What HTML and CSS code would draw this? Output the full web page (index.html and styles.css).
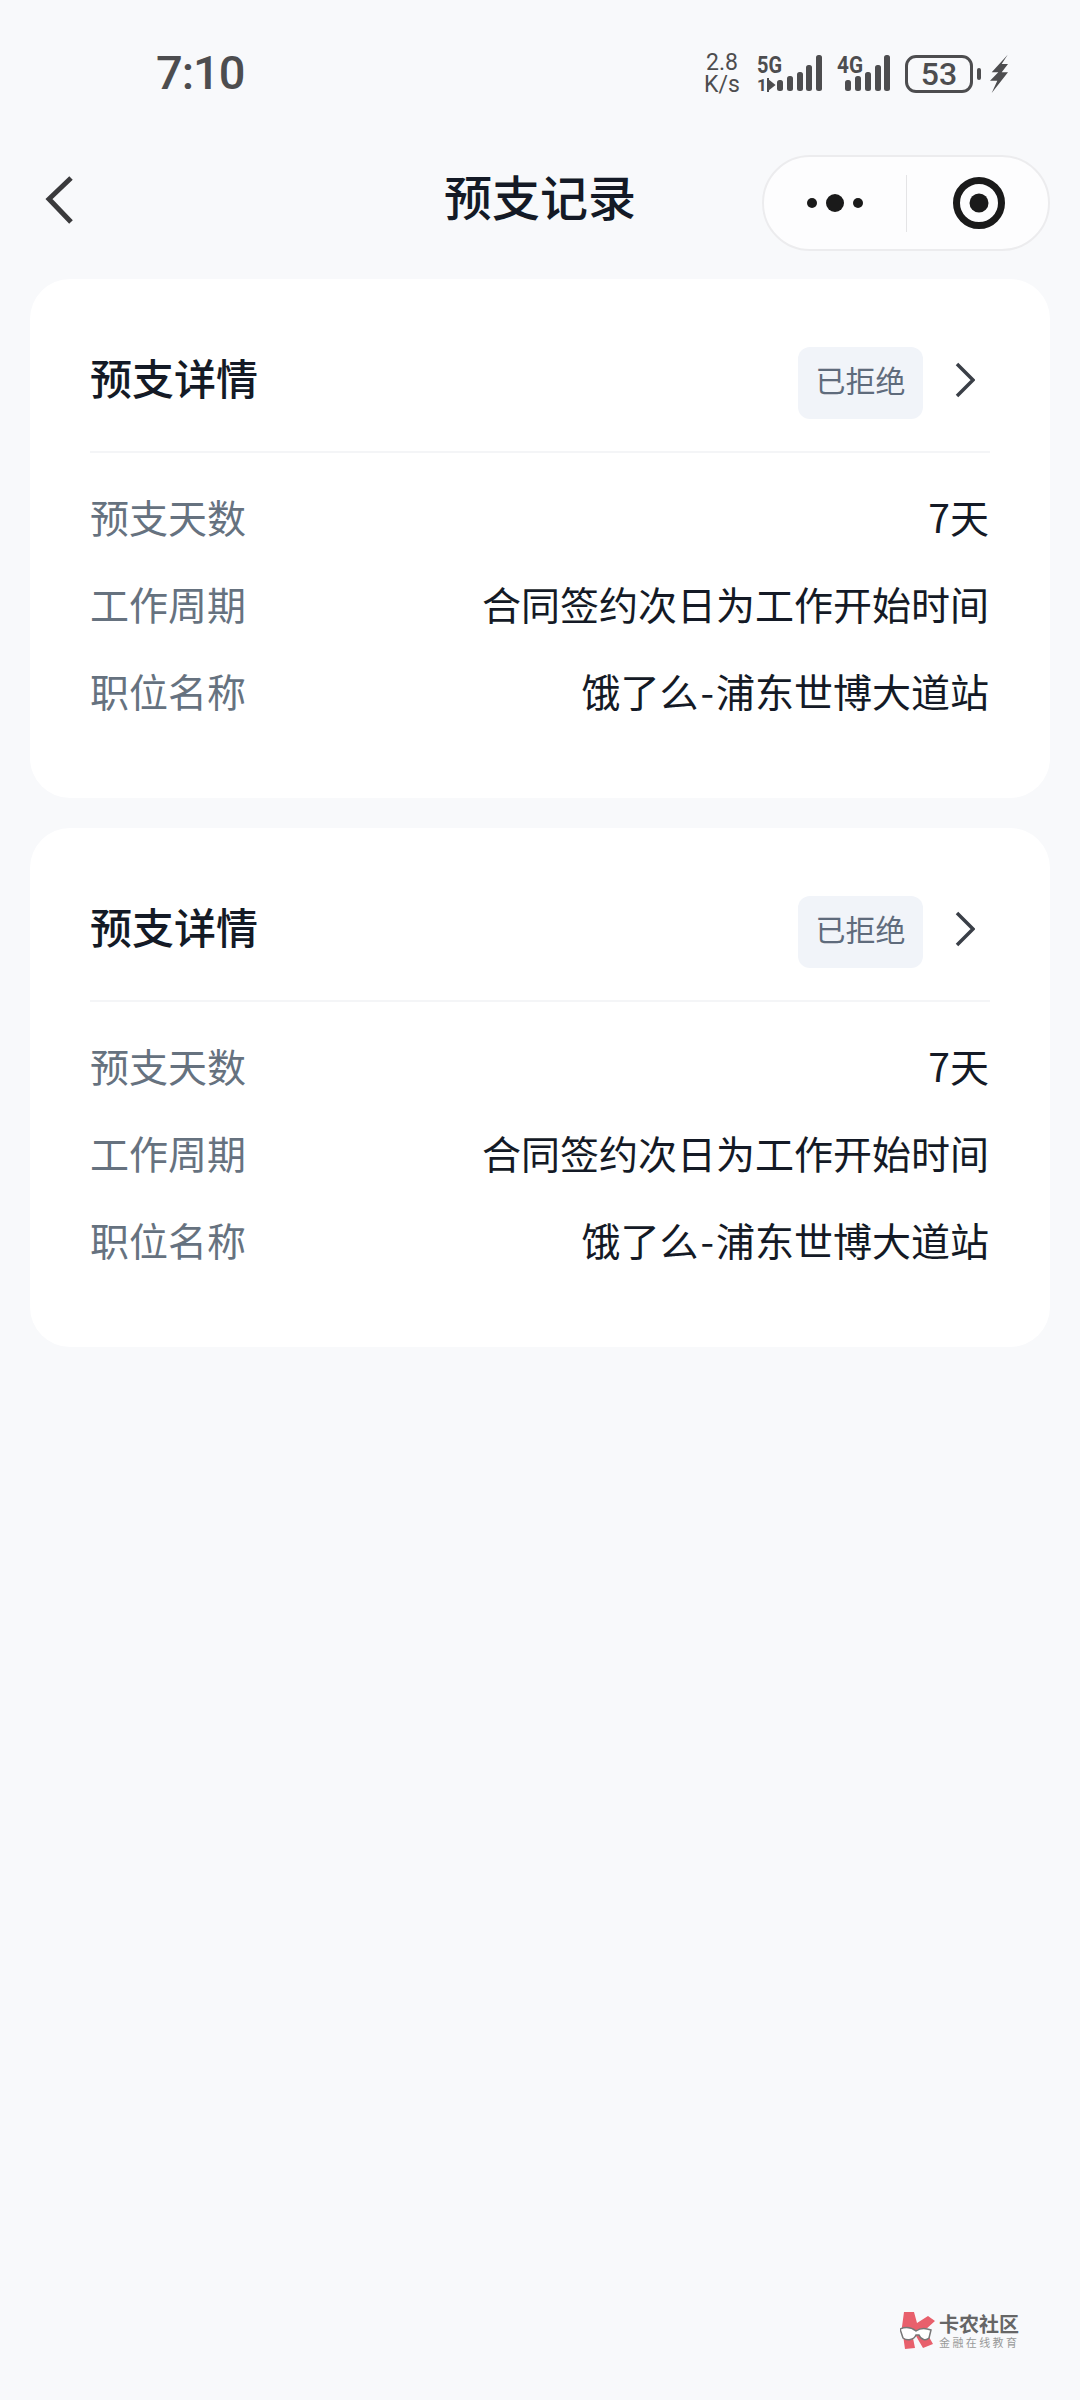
FILE: index.html
```html
<!DOCTYPE html>
<html lang="zh-CN">
<head>
    <meta charset="UTF-8">
    <meta name="viewport" content="width=device-width, initial-scale=1.0">
    <title>预支记录</title>
    <link rel="stylesheet" href="styles.css">
</head>
<body>

<div class="status-bar">
    <span class="time">7:10</span>
    <div class="status-icons">
        <div class="net-speed"><span>2.8</span><span>K/s</span></div>
        <svg class="signal" width="138" height="40" viewBox="0 0 138 40">
            <text class="signal-label" x="3" y="19" textLength="25" lengthAdjust="spacingAndGlyphs">5G</text>
            <text class="signal-small" x="3" y="37">1</text>
            <path d="M14 24v14M15 27l5 4-5 4z" fill="#4d4d4f" stroke="#4d4d4f" stroke-width="2"/>
            <g fill="#4d4d4f">
                <rect x="23" y="26" width="6" height="11" rx="2.5"/>
                <rect x="33" y="22" width="6" height="15" rx="2.5"/>
                <rect x="43" y="18" width="6" height="19" rx="2.5"/>
                <rect x="52" y="11" width="6" height="26" rx="2.5"/>
                <rect x="62" y="1" width="6" height="36" rx="2.5"/>
            </g>
            <text class="signal-label" x="83" y="19" textLength="26" lengthAdjust="spacingAndGlyphs">4G</text>
            <g fill="#4d4d4f">
                <rect x="91" y="26" width="6" height="11" rx="2.5"/>
                <rect x="101" y="22" width="6" height="15" rx="2.5"/>
                <rect x="111" y="18" width="6" height="19" rx="2.5"/>
                <rect x="121" y="11" width="6" height="26" rx="2.5"/>
                <rect x="130" y="1" width="6" height="36" rx="2.5"/>
            </g>
        </svg>
        <div class="battery">53</div>
        <svg class="bolt" width="18" height="40" viewBox="0 0 18 40">
            <path d="M17.7.7 1.7 18.3h6.6L0 26.7h7.3L1.7 39 18 18.3h-6.3L18 10h-6.3z" fill="#4d4d4f"/>
        </svg>
    </div>
</div>

<nav class="nav-bar">
    <a class="back" href="#">
        <svg width="30" height="50" viewBox="0 0 30 50">
            <path d="M27 3 5 24l22 23" fill="none" stroke="#3a3a3c" stroke-width="5"/>
        </svg>
    </a>
    <h1 class="page-title">预支记录</h1>
    <div class="capsule">
        <div class="capsule-btn">
            <svg width="60" height="20" viewBox="0 0 60 20">
                <circle cx="7" cy="10" r="5" fill="#1a1a1a"/>
                <circle cx="30" cy="10" r="9" fill="#1a1a1a"/>
                <circle cx="53" cy="10" r="5" fill="#1a1a1a"/>
            </svg>
        </div>
        <div class="capsule-line"></div>
        <div class="capsule-btn">
            <svg class="target" width="54" height="54" viewBox="0 0 54 54">
                <circle cx="27" cy="27" r="22.5" fill="none" stroke="#1a1a1a" stroke-width="7"/>
                <circle cx="27" cy="27" r="9.5" fill="#1a1a1a"/>
            </svg>
        </div>
    </div>
</nav>

<main class="list">
    <section class="card">
        <div class="card-head">
            <h2 class="card-title">预支详情</h2>
            <span class="tag">已拒绝</span>
            <svg class="arrow" width="20" height="36" viewBox="0 0 20 36">
                <path d="M2 2l16 16L2 34" fill="none" stroke="#3a3f47" stroke-width="3.5"/>
            </svg>
        </div>
        <div class="card-body">
            <div class="row"><span class="row-label">预支天数</span><span class="row-value">7天</span></div>
            <div class="row"><span class="row-label">工作周期</span><span class="row-value">合同签约次日为工作开始时间</span></div>
            <div class="row"><span class="row-label">职位名称</span><span class="row-value">饿了么<span class="dash">-</span>浦东世博大道站</span></div>
        </div>
    </section>

    <section class="card">
        <div class="card-head">
            <h2 class="card-title">预支详情</h2>
            <span class="tag">已拒绝</span>
            <svg class="arrow" width="20" height="36" viewBox="0 0 20 36">
                <path d="M2 2l16 16L2 34" fill="none" stroke="#3a3f47" stroke-width="3.5"/>
            </svg>
        </div>
        <div class="card-body">
            <div class="row"><span class="row-label">预支天数</span><span class="row-value">7天</span></div>
            <div class="row"><span class="row-label">工作周期</span><span class="row-value">合同签约次日为工作开始时间</span></div>
            <div class="row"><span class="row-label">职位名称</span><span class="row-value">饿了么<span class="dash">-</span>浦东世博大道站</span></div>
        </div>
    </section>
</main>

<!-- 水印 -->
<div class="watermark">
    <svg width="36" height="37" viewBox="0 0 36 37">
        <path d="M4 0h10l3 11 11-7 7 5-10 9 8 14-10 4-7-12-3 2 2 10-10 1-2-14-2-1z" fill="#e8606c"/>
        <path d="M0 17c5-2 11-2 16 2 4-3 10-3 15-1l-2 8c-3 3-8 2-10-3h-3c-2 5-9 6-13 3z" fill="#fff" stroke="#777" stroke-width="1.5"/>
    </svg>
    <div class="watermark-text">
        <span class="watermark-name">卡农社区</span>
        <span class="watermark-sub">金融在线教育</span>
    </div>
</div>

</body>
</html>
```

FILE: styles.css
```css
/* Общие стили */
* {
    box-sizing: border-box;
}

body {
    margin: 0;
    height: 2400px;
    position: relative;
    overflow: hidden;
    background-color: #f8f9fb;
    font-family: "Noto Sans CJK SC", "Noto Sans", sans-serif;
    color: #141a26;
}

/* status bar */
.status-bar {
    display: flex;
    align-items: center;
    justify-content: space-between;
    height: 148px;
    padding: 0 72px 0 156px;
    color: #4d4d4f;
}

.time {
    margin-top: -4px;
    font-family: Roboto, sans-serif;
    font-size: 47px;
    font-weight: 500;
    letter-spacing: -1px;
}

.status-icons {
    display: flex;
    align-items: center;
}

.net-speed {
    display: flex;
    flex-direction: column;
    gap: 2px;
    width: 36px;
    margin-right: 14px;
    font-family: Roboto, sans-serif;
    font-size: 23px;
    line-height: 20px;
    text-align: center;
}

.signal {
    margin-right: 13px;
    overflow: visible;
}

.signal-label {
    font-family: Roboto, sans-serif;
    font-size: 23px;
    font-weight: 700;
    fill: #4d4d4f;
}

.signal-small {
    font-family: Roboto, sans-serif;
    font-size: 17px;
    font-weight: 700;
    fill: #4d4d4f;
}

.battery {
    position: relative;
    width: 68px;
    height: 38px;
    border: 3px solid #4d4d4f;
    border-radius: 11px;
    font-family: Roboto, sans-serif;
    font-size: 32px;
    font-weight: 500;
    line-height: 32px;
    text-align: center;
}

.battery::after {
    content: "";
    position: absolute;
    top: 10px;
    right: -11px;
    width: 4px;
    height: 12px;
    border-radius: 2px;
    background-color: #4d4d4f;
}

.bolt {
    margin-left: 17px;
}

/* nav */
.nav-bar {
    display: grid;
    grid-template-columns: 1fr auto 1fr;
    align-items: center;
    height: 110px;
    padding: 0 30px;
}

.back {
    display: block;
    height: 50px;
    margin-left: 14px;
    margin-top: -6px;
}

.page-title {
    margin: -16px 0 0;
    font-size: 48px;
    font-weight: 500;
    line-height: 60px;
}

.capsule {
    justify-self: end;
    display: flex;
    align-items: center;
    width: 288px;
    height: 96px;
    border: 2px solid #ececee;
    border-radius: 48px;
    background-color: #fdfdfe;
}

.capsule-btn {
    flex: 1;
    display: flex;
    justify-content: center;
    align-items: center;
}

.target {
    margin-left: 4px;
}

.capsule-line {
    width: 1px;
    height: 57px;
    background-color: #e4e4e6;
}

/* cards */
.list {
    display: flex;
    flex-direction: column;
    gap: 30px;
    padding: 21px 30px 0;
}

.card {
    height: 519px;
    padding: 68px 60px 0;
    border-radius: 40px;
    background-color: #fff;
}

.card-head {
    display: flex;
    align-items: center;
    padding-bottom: 32px;
    border-bottom: 2px solid #f4f5f7;
}

.card-title {
    flex: 1;
    margin: -12px 0 0;
    font-size: 42px;
    font-weight: 500;
    line-height: 60px;
}

.tag {
    width: 125px;
    height: 72px;
    margin-right: -1px;
    border-radius: 12px;
    background-color: #f1f4f9;
    color: #5f6b7c;
    font-size: 30px;
    line-height: 65px;
    text-align: center;
}

.arrow {
    margin: -6px 15px 0 33px;
}

.card-body {
    padding-top: 19px;
}

.row {
    display: flex;
    justify-content: space-between;
    align-items: center;
    height: 87px;
    padding-right: 1px;
    font-size: 39px;
}

.row-label {
    color: #66727f;
}

.row-value {
    color: #141a26;
}

.dash {
    margin: 0 2px;
}

/* watermark */
.watermark {
    position: absolute;
    left: 900px;
    top: 2312px;
    display: flex;
    align-items: center;
    gap: 3px;
}

.watermark-text {
    display: flex;
    flex-direction: column;
}

.watermark-name {
    font-size: 20px;
    font-weight: 700;
    line-height: 23px;
    color: #666;
}

.watermark-sub {
    font-size: 11px;
    letter-spacing: 2.4px;
    line-height: 14px;
    color: #999;
}
```
